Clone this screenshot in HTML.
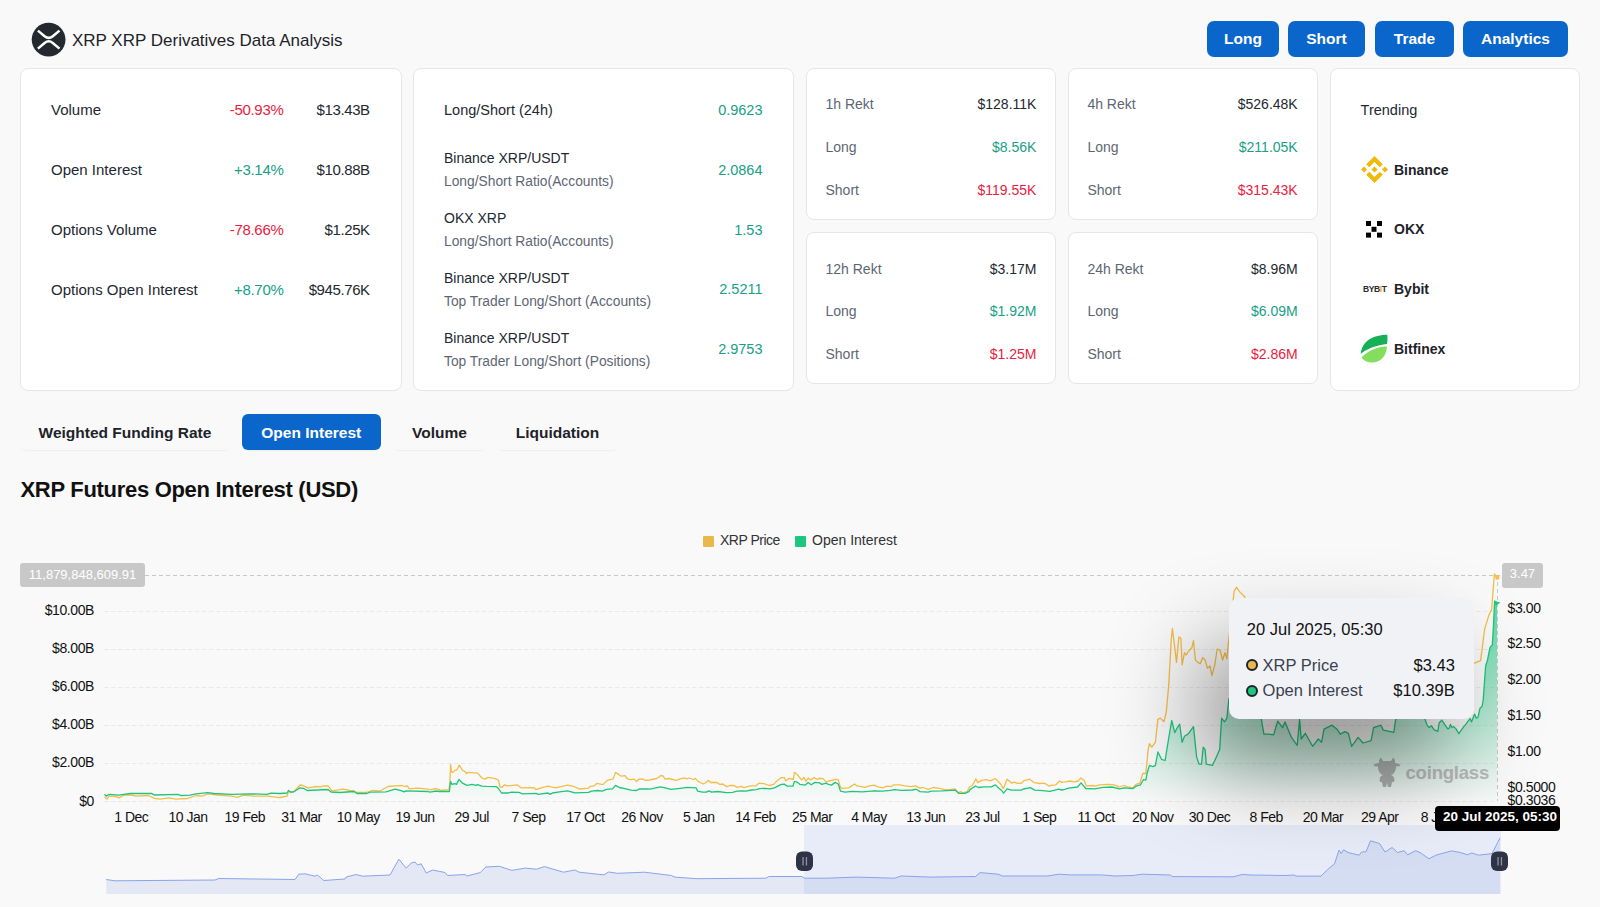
<!DOCTYPE html>
<html><head><meta charset="utf-8">
<style>
html,body{margin:0;padding:0}
body{width:1600px;height:907px;background:#f9f9fa;position:relative;overflow:hidden;font-family:"Liberation Sans",sans-serif;color:#1e2329}
.t{position:absolute;line-height:1;white-space:nowrap}
.card{position:absolute;background:#fff;border:1px solid #e6e6e6;border-radius:8px;box-sizing:border-box}
.btn{position:absolute;top:21px;height:36px;background:#0b66cc;border-radius:7px;color:#fff;font-weight:bold;font-size:15.5px;line-height:36px;text-align:center}
.tab{position:absolute;top:414px;height:36px;border-radius:6px;font-weight:bold;font-size:15.5px;line-height:38px;text-align:center;color:#1e2329;box-shadow:0 2px 2px -1px rgba(0,0,0,0.05)}
.red{color:#e9213e}.grn{color:#17a086}
.lbl{color:#222831}
.sub{color:#5e6673}
.ya{position:absolute;line-height:1;white-space:nowrap;font-size:14px;letter-spacing:-0.4px;color:#111}
.xa{position:absolute;line-height:1;white-space:nowrap;font-size:14px;letter-spacing:-0.5px;color:#111;width:80px;text-align:center}
</style></head><body>

<!-- header -->
<svg style="position:absolute;left:31px;top:21.5px" width="35" height="35" viewBox="0 0 35 35">
<circle cx="17.6" cy="17.6" r="16.9" fill="#23292f"/>
<path d="M6.9,8.6 L13.6,14.2 Q17.7,17.6 21.8,14.2 L28.5,8.6" fill="none" stroke="#fff" stroke-width="2.5"/>
<path d="M6.9,26.6 L13.6,21 Q17.7,17.6 21.8,21 L28.5,26.6" fill="none" stroke="#fff" stroke-width="2.5"/>
</svg>
<div class="t" style="left:72px;top:31.8px;font-size:17px;color:#1e2329">XRP XRP Derivatives Data Analysis</div>

<div class="btn" style="left:1207px;width:72px">Long</div>
<div class="btn" style="left:1288px;width:77px">Short</div>
<div class="btn" style="left:1375px;width:79px">Trade</div>
<div class="btn" style="left:1463px;width:105px">Analytics</div>

<!-- cards -->
<div class="card" style="left:20px;top:68px;width:382px;height:323px"></div>
<div class="card" style="left:413px;top:68px;width:381px;height:323px"></div>
<div class="card" style="left:806px;top:68px;width:250px;height:152px"></div>
<div class="card" style="left:1068px;top:68px;width:250px;height:152px"></div>
<div class="card" style="left:806px;top:232px;width:250px;height:152px"></div>
<div class="card" style="left:1068px;top:232px;width:250px;height:152px"></div>
<div class="card" style="left:1330px;top:68px;width:250px;height:323px"></div>

<!-- card 1 -->
<div class="t lbl" style="left:51px;top:102.3px;font-size:15px">Volume</div>
<div class="t red" style="right:1316.5px;top:102.3px;font-size:15px;letter-spacing:-0.3px">-50.93%</div>
<div class="t lbl" style="right:1230.3px;top:102.3px;font-size:15px;letter-spacing:-0.4px">$13.43B</div>
<div class="t lbl" style="left:51px;top:162px;font-size:15px">Open Interest</div>
<div class="t grn" style="right:1316.5px;top:162px;font-size:15px;letter-spacing:-0.3px">+3.14%</div>
<div class="t lbl" style="right:1230.3px;top:162px;font-size:15px;letter-spacing:-0.4px">$10.88B</div>
<div class="t lbl" style="left:51px;top:221.8px;font-size:15px">Options Volume</div>
<div class="t red" style="right:1316.5px;top:221.8px;font-size:15px;letter-spacing:-0.3px">-78.66%</div>
<div class="t lbl" style="right:1230.3px;top:221.8px;font-size:15px;letter-spacing:-0.4px">$1.25K</div>
<div class="t lbl" style="left:51px;top:281.6px;font-size:15px">Options Open Interest</div>
<div class="t grn" style="right:1316.5px;top:281.6px;font-size:15px;letter-spacing:-0.3px">+8.70%</div>
<div class="t lbl" style="right:1230.3px;top:281.6px;font-size:15px;letter-spacing:-0.4px">$945.76K</div>

<!-- card 2 -->
<div class="t lbl" style="left:444px;top:103.2px;font-size:14.5px">Long/Short (24h)</div>
<div class="t grn" style="right:837.5px;top:103.2px;font-size:14.5px">0.9623</div>
<div class="t lbl" style="left:444px;top:151.2px;font-size:14px">Binance XRP/USDT</div>
<div class="t sub" style="left:444px;top:175.4px;font-size:13.8px">Long/Short Ratio(Accounts)</div>
<div class="t grn" style="right:837.5px;top:163.2px;font-size:14.5px">2.0864</div>
<div class="t lbl" style="left:444px;top:211.2px;font-size:14px">OKX XRP</div>
<div class="t sub" style="left:444px;top:235.4px;font-size:13.8px">Long/Short Ratio(Accounts)</div>
<div class="t grn" style="right:837.5px;top:222.7px;font-size:14.5px">1.53</div>
<div class="t lbl" style="left:444px;top:271.2px;font-size:14px">Binance XRP/USDT</div>
<div class="t sub" style="left:444px;top:295.4px;font-size:13.8px">Top Trader Long/Short (Accounts)</div>
<div class="t grn" style="right:837.5px;top:282.2px;font-size:14.5px">2.5211</div>
<div class="t lbl" style="left:444px;top:330.7px;font-size:14px">Binance XRP/USDT</div>
<div class="t sub" style="left:444px;top:354.7px;font-size:13.8px">Top Trader Long/Short (Positions)</div>
<div class="t grn" style="right:837.5px;top:342.2px;font-size:14.5px">2.9753</div>

<!-- rekt cards -->
<div class="t sub" style="left:825.5px;top:97.4px;font-size:14px">1h Rekt</div>
<div class="t lbl" style="right:563.6px;top:97.4px;font-size:14px">$128.11K</div>
<div class="t sub" style="left:825.5px;top:139.9px;font-size:14px">Long</div>
<div class="t grn" style="right:563.6px;top:139.9px;font-size:14px">$8.56K</div>
<div class="t sub" style="left:825.5px;top:182.7px;font-size:14px">Short</div>
<div class="t red" style="right:563.6px;top:182.7px;font-size:14px">$119.55K</div>

<div class="t sub" style="left:1087.4px;top:97.4px;font-size:14px">4h Rekt</div>
<div class="t lbl" style="right:302.3px;top:97.4px;font-size:14px">$526.48K</div>
<div class="t sub" style="left:1087.4px;top:139.9px;font-size:14px">Long</div>
<div class="t grn" style="right:302.3px;top:139.9px;font-size:14px">$211.05K</div>
<div class="t sub" style="left:1087.4px;top:182.7px;font-size:14px">Short</div>
<div class="t red" style="right:302.3px;top:182.7px;font-size:14px">$315.43K</div>

<div class="t sub" style="left:825.5px;top:261.8px;font-size:14px">12h Rekt</div>
<div class="t lbl" style="right:563.6px;top:261.8px;font-size:14px">$3.17M</div>
<div class="t sub" style="left:825.5px;top:304.4px;font-size:14px">Long</div>
<div class="t grn" style="right:563.6px;top:304.4px;font-size:14px">$1.92M</div>
<div class="t sub" style="left:825.5px;top:346.7px;font-size:14px">Short</div>
<div class="t red" style="right:563.6px;top:346.7px;font-size:14px">$1.25M</div>

<div class="t sub" style="left:1087.4px;top:261.8px;font-size:14px">24h Rekt</div>
<div class="t lbl" style="right:302.3px;top:261.8px;font-size:14px">$8.96M</div>
<div class="t sub" style="left:1087.4px;top:304.4px;font-size:14px">Long</div>
<div class="t grn" style="right:302.3px;top:304.4px;font-size:14px">$6.09M</div>
<div class="t sub" style="left:1087.4px;top:346.7px;font-size:14px">Short</div>
<div class="t red" style="right:302.3px;top:346.7px;font-size:14px">$2.86M</div>

<!-- trending -->
<div class="t lbl" style="left:1360.6px;top:103.2px;font-size:14.5px">Trending</div>
<svg style="position:absolute;left:1360.5px;top:156.2px" width="27" height="27" viewBox="0 0 126.61 126.61">
<g fill="#f0b90b"><path d="M38.73,53.2 L63.3,28.64 L87.89,53.22 L102.19,38.92 L63.3,0 L24.42,38.88 Z"/>
<path d="M0,63.31 L14.3,49 L28.61,63.31 L14.3,77.61 Z"/>
<path d="M38.73,73.41 L63.3,98 L87.89,73.4 L102.2,87.69 L63.3,126.61 L24.42,87.73 Z"/>
<path d="M98,63.31 L112.3,49 L126.61,63.3 L112.3,77.61 Z"/>
<path d="M77.83,63.3 L63.3,48.76 L48.79,63.27 L63.3,77.79 Z"/></g>
</svg>
<div class="t" style="left:1394px;top:163.4px;font-size:14px;font-weight:bold;color:#1e2329">Binance</div>
<svg style="position:absolute;left:1366px;top:221px" width="16" height="17" viewBox="0 0 16 17">
<g fill="#000"><rect x="0" y="0" width="5" height="5"/><rect x="11" y="0" width="5" height="5"/><rect x="5.5" y="5.8" width="5" height="5"/><rect x="0" y="11.6" width="5" height="5"/><rect x="11" y="11.6" width="5" height="5"/></g>
</svg>
<div class="t" style="left:1394px;top:222.1px;font-size:14px;font-weight:bold;color:#1e2329">OKX</div>
<div class="t" style="left:1363px;top:285px;font-size:8.5px;font-weight:bold;color:#2b2b2b;letter-spacing:-0.4px">BYB<span style="color:#f7a600">I</span>T</div>
<div class="t" style="left:1394px;top:282.3px;font-size:14px;font-weight:bold;color:#1e2329">Bybit</div>
<svg style="position:absolute;left:1360px;top:334px" width="28" height="29" viewBox="0 0 28 29">
<path d="M27.3,0.8 C14,1 2,6.5 0.7,20 C7,14.5 17,11 27,10 C27.6,7 27.6,3.5 27.3,0.8 Z" fill="#16b157"/>
<path d="M1.5,23.5 C8,16.5 17,13 26.8,12.2 C27,21 21,28.5 12,28.5 C7,28.5 3.5,26.5 1.5,23.5 Z" fill="#85dd5d"/>
</svg>
<div class="t" style="left:1394px;top:342.1px;font-size:14px;font-weight:bold;color:#1e2329">Bitfinex</div>

<!-- tabs -->
<div class="tab" style="left:20px;width:210px">Weighted Funding Rate</div>
<div class="tab" style="left:241.5px;width:139.5px;background:#0b66cc;color:#fff">Open Interest</div>
<div class="tab" style="left:393px;width:93px">Volume</div>
<div class="tab" style="left:497px;width:121px">Liquidation</div>

<div class="t" style="left:20.5px;top:479.4px;font-size:22px;font-weight:bold;letter-spacing:-0.3px;color:#111">XRP Futures Open Interest (USD)</div>

<!-- legend -->
<div style="position:absolute;left:702.5px;top:536px;width:11.5px;height:11px;background:#e8b84c;border-radius:1px"></div>
<div class="t" style="left:720px;top:533.2px;font-size:14px;color:#333;letter-spacing:-0.5px">XRP Price</div>
<div style="position:absolute;left:794.5px;top:536px;width:11.5px;height:11px;background:#1ec77f;border-radius:1px"></div>
<div class="t" style="left:812px;top:533.2px;font-size:14px;color:#333">Open Interest</div>

<!-- chart svg -->
<svg style="position:absolute;left:0;top:0" width="1600" height="907" viewBox="0 0 1600 907">
<defs>
<linearGradient id="ga" gradientUnits="userSpaceOnUse" x1="0" y1="600" x2="0" y2="801">
<stop offset="0" stop-color="#1ec77f" stop-opacity="0.72"/>
<stop offset="1" stop-color="#1ec77f" stop-opacity="0.0"/>
</linearGradient>
</defs>
<g stroke="#e9e9e9" stroke-width="1" stroke-dasharray="4.5,2.5">
<line x1="104" y1="611.5" x2="1497" y2="611.5"/>
<line x1="104" y1="649.5" x2="1497" y2="649.5"/>
<line x1="104" y1="687.5" x2="1497" y2="687.5"/>
<line x1="104" y1="725.5" x2="1497" y2="725.5"/>
<line x1="104" y1="763.5" x2="1497" y2="763.5"/>
<line x1="104" y1="801.5" x2="1497" y2="801.5"/>
</g>
<line x1="145" y1="575.5" x2="1500" y2="575.5" stroke="#c8c8c8" stroke-width="1" stroke-dasharray="4,3"/>
<path d="M104.5,794.3 L106.3,796.1 L109.2,794.3 L118.8,795.2 L130.6,793.5 L152.0,793.5 L154.4,795.0 L178.0,794.3 L180.5,795.5 L190.0,795.2 L196.0,793.8 L207.8,792.6 L213.8,793.5 L231.6,794.3 L249.4,793.8 L267.2,794.3 L270.8,793.2 L280.0,793.5 L287.0,793.0 L288.5,790.5 L290.5,792.0 L294.0,791.8 L300.0,787.8 L304.0,788.5 L307.0,790.5 L328.0,789.5 L331.0,792.0 L340.0,792.5 L354.0,791.5 L357.0,793.5 L367.0,793.5 L370.0,792.2 L386.0,791.8 L395.0,789.2 L402.0,790.8 L404.0,791.8 L406.0,790.8 L428.0,791.5 L430.0,792.2 L436.0,791.0 L439.5,791.5 L440.0,791.5 L449.4,791.5 L450.5,781.4 L452.0,784.4 L455.0,783.6 L456.5,784.4 L459.1,779.4 L462.5,783.2 L467.0,785.4 L472.2,784.4 L476.0,785.4 L477.5,784.6 L482.0,786.2 L486.5,786.4 L496.2,786.6 L498.5,788.5 L501.5,793.0 L507.5,793.0 L512.0,792.2 L518.8,792.4 L522.5,793.8 L536.0,793.4 L538.2,794.4 L548.0,793.0 L550.2,794.4 L552.5,793.0 L559.5,791.9 L567.5,790.9 L575.0,792.8 L588.5,792.4 L591.5,791.2 L597.5,790.5 L602.0,791.1 L606.5,789.4 L612.5,788.9 L615.5,785.4 L619.2,787.5 L626.0,788.9 L631.2,790.1 L636.5,790.5 L639.5,788.9 L646.2,789.0 L650.0,789.1 L660.5,786.8 L665.0,787.9 L671.0,789.4 L680.0,788.4 L687.5,787.4 L696.1,787.8 L697.6,791.1 L702.5,792.2 L706.2,792.1 L708.9,790.8 L711.5,792.1 L717.5,791.5 L726.5,792.6 L732.5,792.4 L737.0,791.1 L743.0,790.9 L746.0,791.1 L751.3,790.0 L756.5,789.6 L759.5,788.6 L765.5,788.4 L770.0,788.9 L774.5,787.8 L776.8,786.6 L781.3,784.4 L784.3,784.1 L787.3,786.2 L792.9,786.2 L794.4,781.4 L797.0,782.1 L800.0,784.4 L805.2,785.1 L808.2,782.5 L811.2,784.8 L815.0,782.4 L819.5,782.9 L821.8,784.4 L826.2,783.2 L827.8,784.1 L831.5,785.1 L835.2,782.4 L838.2,784.0 L840.5,791.1 L845.0,792.1 L852.5,791.4 L862.2,791.9 L874.2,790.8 L882.5,791.1 L890.0,790.4 L894.5,789.6 L901.2,790.4 L912.5,790.0 L916.2,789.2 L920.0,791.6 L928.2,792.1 L931.2,791.2 L942.5,790.9 L955.2,790.1 L959.0,793.4 L965.0,793.4 L968.8,791.6 L970.2,789.4 L975.5,786.0 L978.5,787.5 L983.8,786.8 L991.2,786.8 L995.4,784.9 L998.8,788.2 L1001.8,790.5 L1003.6,793.1 L1007.0,788.9 L1011.5,790.1 L1021.2,790.1 L1023.5,789.0 L1030.2,787.6 L1034.8,790.1 L1040.0,790.3 L1049.8,791.4 L1058.8,789.2 L1061.8,790.0 L1064.8,789.4 L1068.5,788.1 L1077.5,787.0 L1081.1,782.9 L1085.8,788.5 L1094.8,788.9 L1103.0,787.4 L1112.0,787.0 L1119.5,788.9 L1124.0,787.8 L1133.0,788.6 L1136.0,786.2 L1140.5,784.8 L1143.5,779.5 L1145.8,780.2 L1147.0,773.8 L1149.4,765.4 L1153.0,766.6 L1155.4,765.4 L1157.9,752.0 L1161.5,759.3 L1165.1,760.5 L1168.8,737.5 L1171.7,720.5 L1174.8,732.6 L1177.2,727.8 L1179.7,724.2 L1182.1,742.3 L1184.5,736.3 L1188.2,733.9 L1193.5,726.6 L1196.6,756.9 L1199.1,764.2 L1201.5,764.2 L1203.2,747.2 L1205.1,749.6 L1206.3,764.2 L1212.4,765.4 L1214.8,760.5 L1219.7,749.6 L1221.6,718.1 L1224.5,721.8 L1226.9,718.1 L1228.9,698.7 L1240.0,690.0 L1255.0,700.0 L1261.4,719.5 L1263.9,734.1 L1268.8,734.1 L1273.6,734.9 L1277.7,721.1 L1282.6,727.6 L1285.0,721.9 L1291.5,737.4 L1297.2,745.5 L1299.6,719.5 L1301.2,739.0 L1305.3,733.3 L1312.6,746.3 L1318.3,739.0 L1321.6,742.2 L1324.0,729.2 L1332.1,725.2 L1337.0,729.2 L1340.2,734.1 L1345.1,731.7 L1348.4,733.3 L1351.6,746.3 L1358.1,737.4 L1363.0,743.0 L1371.1,740.6 L1373.6,727.6 L1380.9,725.2 L1383.3,730.1 L1393.8,732.3 L1395.5,720.3 L1399.0,703.0 L1421.0,703.0 L1425.4,720.3 L1427.1,725.4 L1429.2,727.5 L1431.6,725.8 L1434.0,729.6 L1437.8,731.3 L1439.2,722.7 L1441.9,720.3 L1445.0,724.8 L1447.8,728.9 L1449.1,728.2 L1450.5,724.4 L1451.9,727.5 L1453.6,726.5 L1456.0,728.9 L1458.8,733.7 L1463.6,726.8 L1464.9,725.4 L1467.0,722.7 L1470.1,718.6 L1471.5,722.0 L1474.6,714.1 L1476.3,718.2 L1478.0,717.2 L1480.0,708.2 L1482.1,706.2 L1483.2,700.0 L1485.6,666.0 L1487.5,660.0 L1490.0,647.5 L1492.3,645.0 L1493.5,625.0 L1494.6,601.0 L1497.1,602.7 L1497.1,801 L104.5,801 Z" fill="url(#ga)"/>
<path d="M104.5,796.7 L106.9,799.1 L109.2,796.1 L116.4,796.7 L118.8,797.9 L124.7,795.0 L130.6,795.0 L136.6,796.1 L148.4,795.5 L154.4,798.3 L160.3,799.1 L168.6,797.9 L175.8,799.1 L187.6,798.5 L196.0,795.5 L201.9,796.1 L207.8,793.8 L217.3,795.0 L231.6,796.1 L237.5,797.3 L243.5,795.2 L253.0,796.1 L268.4,796.1 L279.4,797.7 L280.0,797.5 L287.0,796.2 L288.5,791.5 L291.0,792.5 L294.0,791.5 L300.0,785.0 L303.0,785.5 L308.0,787.8 L317.0,786.5 L320.0,787.2 L323.0,786.0 L328.0,785.8 L332.0,791.0 L337.0,790.2 L343.0,789.2 L350.0,790.5 L354.0,791.0 L357.0,792.5 L366.0,792.5 L372.0,790.5 L380.0,791.0 L388.0,786.5 L395.0,785.8 L402.0,785.5 L405.0,786.5 L407.5,785.8 L409.0,788.8 L418.0,788.2 L428.0,789.2 L430.0,789.8 L436.0,788.5 L439.5,789.5 L440.0,790.4 L444.5,790.0 L449.0,789.6 L449.9,782.5 L450.6,764.5 L451.6,772.0 L453.1,772.4 L455.0,770.1 L456.9,770.1 L459.1,765.2 L462.5,770.1 L465.5,772.0 L466.6,773.5 L468.5,772.4 L477.5,773.1 L482.0,778.0 L485.0,779.1 L488.0,777.4 L495.5,778.6 L498.5,780.2 L500.0,787.0 L502.2,787.4 L504.5,784.8 L507.5,785.9 L517.2,784.8 L521.0,787.8 L533.8,787.6 L536.0,789.6 L541.2,787.8 L548.0,786.2 L555.5,787.8 L559.5,787.0 L560.0,786.8 L567.5,785.1 L573.5,786.4 L579.5,789.0 L588.5,788.2 L590.0,786.4 L593.8,785.9 L596.8,783.4 L602.8,784.6 L607.2,780.4 L613.2,778.9 L615.5,772.5 L618.5,774.4 L620.8,776.1 L625.2,775.6 L626.8,778.4 L629.8,779.6 L634.2,779.1 L636.5,781.5 L638.8,779.2 L642.5,778.9 L645.5,780.4 L649.2,780.0 L656.8,778.5 L660.9,775.5 L663.5,776.2 L665.0,779.2 L668.8,778.5 L676.2,780.4 L680.0,778.8 L684.9,778.0 L686.8,778.8 L689.0,778.0 L693.5,779.5 L695.4,778.4 L698.0,781.4 L703.2,784.0 L706.2,782.5 L708.5,780.2 L710.8,782.5 L716.8,782.5 L719.8,784.4 L722.8,784.0 L726.5,786.6 L730.2,785.5 L734.0,785.5 L737.0,787.4 L741.5,786.4 L743.8,787.6 L750.5,785.9 L755.8,785.9 L758.8,783.2 L764.0,783.6 L769.2,785.5 L773.8,784.4 L776.0,781.8 L781.3,777.6 L784.3,777.6 L785.8,781.0 L788.8,778.4 L793.3,779.5 L794.4,772.4 L797.0,774.2 L800.0,778.0 L801.5,779.9 L804.1,777.6 L806.0,781.4 L808.2,778.0 L810.5,779.9 L814.2,777.6 L817.2,779.5 L819.5,778.4 L823.2,778.6 L826.2,782.1 L828.5,781.0 L833.0,780.2 L834.5,779.4 L838.2,779.6 L840.5,787.4 L842.0,788.4 L848.8,787.8 L851.8,785.9 L854.4,783.9 L857.0,785.9 L865.2,787.4 L869.0,785.9 L874.3,785.1 L877.2,786.6 L882.5,787.8 L887.0,786.2 L891.5,786.6 L893.8,784.8 L899.8,784.8 L905.0,785.9 L911.0,786.6 L915.5,785.9 L920.0,788.2 L923.0,787.5 L928.2,789.4 L933.1,787.5 L939.5,788.4 L944.0,789.4 L948.5,789.8 L954.5,788.9 L956.0,789.8 L958.2,793.1 L960.5,791.6 L962.8,792.8 L967.2,791.6 L969.5,786.8 L972.5,785.2 L975.9,778.9 L977.8,782.6 L981.5,780.4 L986.0,779.6 L990.5,780.8 L995.0,778.5 L998.0,781.1 L1001.0,784.5 L1003.2,788.6 L1004.8,785.2 L1007.0,779.2 L1011.5,783.0 L1014.5,782.2 L1017.5,783.4 L1022.0,783.0 L1023.5,780.8 L1029.5,779.2 L1034.0,782.6 L1040.0,783.5 L1043.0,783.2 L1046.0,783.9 L1049.0,786.2 L1052.0,785.1 L1055.8,784.8 L1059.5,781.0 L1061.8,782.4 L1065.5,781.8 L1070.0,781.0 L1073.8,781.8 L1078.2,781.0 L1080.9,777.9 L1084.2,780.6 L1086.5,786.2 L1092.5,785.5 L1095.5,786.2 L1099.2,784.8 L1107.5,784.4 L1112.8,784.6 L1117.2,785.9 L1118.8,787.0 L1124.0,785.5 L1127.0,786.6 L1133.0,787.8 L1136.0,784.4 L1139.8,783.2 L1142.8,773.5 L1145.8,773.5 L1148.2,749.6 L1149.4,743.6 L1151.8,747.2 L1155.4,742.3 L1157.9,719.3 L1160.3,718.1 L1163.9,721.8 L1166.3,712.0 L1168.8,684.2 L1171.2,640.6 L1172.4,628.5 L1174.8,647.8 L1176.5,662.4 L1178.9,637.0 L1180.9,638.2 L1182.1,664.8 L1184.5,652.7 L1186.2,655.1 L1188.2,651.5 L1191.8,647.8 L1193.5,640.6 L1195.4,660.0 L1197.8,662.4 L1200.3,663.6 L1202.7,657.5 L1205.1,660.0 L1207.5,668.4 L1210.0,666.0 L1211.9,675.7 L1214.8,664.8 L1217.2,649.0 L1220.1,650.3 L1222.6,660.0 L1225.0,652.7 L1226.9,658.8 L1228.9,638.2 L1234.2,590.9 L1236.6,587.3 L1240.0,592.1 L1244.5,596.5 L1260.0,640.0 L1290.0,660.0 L1320.0,650.0 L1350.0,665.0 L1380.0,655.0 L1410.0,668.0 L1440.0,660.0 L1466.0,668.0 L1473.7,663.4 L1480.6,660.6 L1484.7,628.9 L1488.9,615.1 L1491.6,609.6 L1494.4,573.8 L1497.1,577.9" fill="none" stroke="#f5bd48" stroke-width="1.3" stroke-linejoin="round"/>
<path d="M104.5,794.3 L106.3,796.1 L109.2,794.3 L118.8,795.2 L130.6,793.5 L152.0,793.5 L154.4,795.0 L178.0,794.3 L180.5,795.5 L190.0,795.2 L196.0,793.8 L207.8,792.6 L213.8,793.5 L231.6,794.3 L249.4,793.8 L267.2,794.3 L270.8,793.2 L280.0,793.5 L287.0,793.0 L288.5,790.5 L290.5,792.0 L294.0,791.8 L300.0,787.8 L304.0,788.5 L307.0,790.5 L328.0,789.5 L331.0,792.0 L340.0,792.5 L354.0,791.5 L357.0,793.5 L367.0,793.5 L370.0,792.2 L386.0,791.8 L395.0,789.2 L402.0,790.8 L404.0,791.8 L406.0,790.8 L428.0,791.5 L430.0,792.2 L436.0,791.0 L439.5,791.5 L440.0,791.5 L449.4,791.5 L450.5,781.4 L452.0,784.4 L455.0,783.6 L456.5,784.4 L459.1,779.4 L462.5,783.2 L467.0,785.4 L472.2,784.4 L476.0,785.4 L477.5,784.6 L482.0,786.2 L486.5,786.4 L496.2,786.6 L498.5,788.5 L501.5,793.0 L507.5,793.0 L512.0,792.2 L518.8,792.4 L522.5,793.8 L536.0,793.4 L538.2,794.4 L548.0,793.0 L550.2,794.4 L552.5,793.0 L559.5,791.9 L567.5,790.9 L575.0,792.8 L588.5,792.4 L591.5,791.2 L597.5,790.5 L602.0,791.1 L606.5,789.4 L612.5,788.9 L615.5,785.4 L619.2,787.5 L626.0,788.9 L631.2,790.1 L636.5,790.5 L639.5,788.9 L646.2,789.0 L650.0,789.1 L660.5,786.8 L665.0,787.9 L671.0,789.4 L680.0,788.4 L687.5,787.4 L696.1,787.8 L697.6,791.1 L702.5,792.2 L706.2,792.1 L708.9,790.8 L711.5,792.1 L717.5,791.5 L726.5,792.6 L732.5,792.4 L737.0,791.1 L743.0,790.9 L746.0,791.1 L751.3,790.0 L756.5,789.6 L759.5,788.6 L765.5,788.4 L770.0,788.9 L774.5,787.8 L776.8,786.6 L781.3,784.4 L784.3,784.1 L787.3,786.2 L792.9,786.2 L794.4,781.4 L797.0,782.1 L800.0,784.4 L805.2,785.1 L808.2,782.5 L811.2,784.8 L815.0,782.4 L819.5,782.9 L821.8,784.4 L826.2,783.2 L827.8,784.1 L831.5,785.1 L835.2,782.4 L838.2,784.0 L840.5,791.1 L845.0,792.1 L852.5,791.4 L862.2,791.9 L874.2,790.8 L882.5,791.1 L890.0,790.4 L894.5,789.6 L901.2,790.4 L912.5,790.0 L916.2,789.2 L920.0,791.6 L928.2,792.1 L931.2,791.2 L942.5,790.9 L955.2,790.1 L959.0,793.4 L965.0,793.4 L968.8,791.6 L970.2,789.4 L975.5,786.0 L978.5,787.5 L983.8,786.8 L991.2,786.8 L995.4,784.9 L998.8,788.2 L1001.8,790.5 L1003.6,793.1 L1007.0,788.9 L1011.5,790.1 L1021.2,790.1 L1023.5,789.0 L1030.2,787.6 L1034.8,790.1 L1040.0,790.3 L1049.8,791.4 L1058.8,789.2 L1061.8,790.0 L1064.8,789.4 L1068.5,788.1 L1077.5,787.0 L1081.1,782.9 L1085.8,788.5 L1094.8,788.9 L1103.0,787.4 L1112.0,787.0 L1119.5,788.9 L1124.0,787.8 L1133.0,788.6 L1136.0,786.2 L1140.5,784.8 L1143.5,779.5 L1145.8,780.2 L1147.0,773.8 L1149.4,765.4 L1153.0,766.6 L1155.4,765.4 L1157.9,752.0 L1161.5,759.3 L1165.1,760.5 L1168.8,737.5 L1171.7,720.5 L1174.8,732.6 L1177.2,727.8 L1179.7,724.2 L1182.1,742.3 L1184.5,736.3 L1188.2,733.9 L1193.5,726.6 L1196.6,756.9 L1199.1,764.2 L1201.5,764.2 L1203.2,747.2 L1205.1,749.6 L1206.3,764.2 L1212.4,765.4 L1214.8,760.5 L1219.7,749.6 L1221.6,718.1 L1224.5,721.8 L1226.9,718.1 L1228.9,698.7 L1240.0,690.0 L1255.0,700.0 L1261.4,719.5 L1263.9,734.1 L1268.8,734.1 L1273.6,734.9 L1277.7,721.1 L1282.6,727.6 L1285.0,721.9 L1291.5,737.4 L1297.2,745.5 L1299.6,719.5 L1301.2,739.0 L1305.3,733.3 L1312.6,746.3 L1318.3,739.0 L1321.6,742.2 L1324.0,729.2 L1332.1,725.2 L1337.0,729.2 L1340.2,734.1 L1345.1,731.7 L1348.4,733.3 L1351.6,746.3 L1358.1,737.4 L1363.0,743.0 L1371.1,740.6 L1373.6,727.6 L1380.9,725.2 L1383.3,730.1 L1393.8,732.3 L1395.5,720.3 L1399.0,703.0 L1421.0,703.0 L1425.4,720.3 L1427.1,725.4 L1429.2,727.5 L1431.6,725.8 L1434.0,729.6 L1437.8,731.3 L1439.2,722.7 L1441.9,720.3 L1445.0,724.8 L1447.8,728.9 L1449.1,728.2 L1450.5,724.4 L1451.9,727.5 L1453.6,726.5 L1456.0,728.9 L1458.8,733.7 L1463.6,726.8 L1464.9,725.4 L1467.0,722.7 L1470.1,718.6 L1471.5,722.0 L1474.6,714.1 L1476.3,718.2 L1478.0,717.2 L1480.0,708.2 L1482.1,706.2 L1483.2,700.0 L1485.6,666.0 L1487.5,660.0 L1490.0,647.5 L1492.3,645.0 L1493.5,625.0 L1494.6,601.0 L1497.1,602.7" fill="none" stroke="#20c57c" stroke-width="1.3" stroke-linejoin="round"/>
<line x1="1497.5" y1="575" x2="1497.5" y2="801" stroke="#c8c8c8" stroke-width="1" stroke-dasharray="4,3"/>
<circle cx="1497.3" cy="577.5" r="2.2" fill="#f7bf4f"/>
<path d="M1494,601 L1500.5,602.5 L1496,605.5 Z" fill="#22c97f"/>
<!-- slider -->
<path d="M106.2,879.5 L115.0,880.8 L215.0,880.0 L218.8,878.5 L295.0,879.5 L298.8,874.2 L305.0,873.8 L315.0,876.2 L317.5,875.0 L323.8,880.5 L345.0,879.0 L346.2,877.0 L356.2,874.5 L362.5,876.2 L390.0,875.0 L398.8,859.2 L406.2,868.2 L411.2,863.0 L415.0,862.0 L417.5,865.0 L421.2,863.8 L426.2,873.0 L432.5,870.0 L445.0,872.5 L447.5,875.5 L465.0,874.5 L466.8,876.0 L480.2,872.6 L485.9,867.0 L499.4,866.3 L511.8,870.4 L525.2,868.1 L536.5,869.2 L544.4,866.6 L563.5,872.2 L574.8,870.0 L579.2,872.2 L604.0,874.9 L608.5,872.0 L617.5,873.3 L644.5,872.2 L671.5,875.5 L674.9,877.1 L696.3,878.7 L766.0,878.2 L768.8,876.5 L802.0,876.5 L804.5,878.2 L827.0,878.2 L856.2,877.1 L894.5,878.2 L901.2,876.0 L930.5,877.1 L975.5,876.5 L980.0,872.6 L998.0,874.2 L1002.5,876.0 L1047.5,876.0 L1058.8,874.2 L1070.0,874.9 L1101.5,874.9 L1115.0,876.0 L1133.0,875.5 L1142.0,874.2 L1170.2,875.0 L1172.5,876.6 L1233.2,876.8 L1242.2,874.5 L1251.2,875.0 L1285.0,875.5 L1294.0,875.0 L1296.2,876.1 L1321.0,876.1 L1327.8,869.4 L1334.5,863.8 L1339.0,850.2 L1341.2,853.6 L1343.5,849.8 L1348.0,852.5 L1352.5,853.6 L1359.2,855.2 L1361.5,852.0 L1366.0,851.8 L1370.5,840.8 L1379.5,843.5 L1385.0,852.0 L1392.0,847.5 L1397.5,852.5 L1404.2,850.7 L1407.6,854.8 L1415.5,850.7 L1420.0,852.5 L1429.0,858.8 L1435.8,855.2 L1451.5,850.9 L1460.5,852.5 L1467.3,854.8 L1471.8,853.0 L1478.5,855.2 L1492.0,853.6 L1497.7,842.4 L1500.0,837.9 L1500,894 L106.25,894 Z" fill="#e3e8f4"/>
<rect x="804" y="825" width="697" height="69" fill="#8fa8f0" fill-opacity="0.16"/>
<path d="M106.2,879.5 L115.0,880.8 L215.0,880.0 L218.8,878.5 L295.0,879.5 L298.8,874.2 L305.0,873.8 L315.0,876.2 L317.5,875.0 L323.8,880.5 L345.0,879.0 L346.2,877.0 L356.2,874.5 L362.5,876.2 L390.0,875.0 L398.8,859.2 L406.2,868.2 L411.2,863.0 L415.0,862.0 L417.5,865.0 L421.2,863.8 L426.2,873.0 L432.5,870.0 L445.0,872.5 L447.5,875.5 L465.0,874.5 L466.8,876.0 L480.2,872.6 L485.9,867.0 L499.4,866.3 L511.8,870.4 L525.2,868.1 L536.5,869.2 L544.4,866.6 L563.5,872.2 L574.8,870.0 L579.2,872.2 L604.0,874.9 L608.5,872.0 L617.5,873.3 L644.5,872.2 L671.5,875.5 L674.9,877.1 L696.3,878.7 L766.0,878.2 L768.8,876.5 L802.0,876.5 L804.5,878.2 L827.0,878.2 L856.2,877.1 L894.5,878.2 L901.2,876.0 L930.5,877.1 L975.5,876.5 L980.0,872.6 L998.0,874.2 L1002.5,876.0 L1047.5,876.0 L1058.8,874.2 L1070.0,874.9 L1101.5,874.9 L1115.0,876.0 L1133.0,875.5 L1142.0,874.2 L1170.2,875.0 L1172.5,876.6 L1233.2,876.8 L1242.2,874.5 L1251.2,875.0 L1285.0,875.5 L1294.0,875.0 L1296.2,876.1 L1321.0,876.1 L1327.8,869.4 L1334.5,863.8 L1339.0,850.2 L1341.2,853.6 L1343.5,849.8 L1348.0,852.5 L1352.5,853.6 L1359.2,855.2 L1361.5,852.0 L1366.0,851.8 L1370.5,840.8 L1379.5,843.5 L1385.0,852.0 L1392.0,847.5 L1397.5,852.5 L1404.2,850.7 L1407.6,854.8 L1415.5,850.7 L1420.0,852.5 L1429.0,858.8 L1435.8,855.2 L1451.5,850.9 L1460.5,852.5 L1467.3,854.8 L1471.8,853.0 L1478.5,855.2 L1492.0,853.6 L1497.7,842.4 L1500.0,837.9" fill="none" stroke="#8aa4ea" stroke-width="1"/>
<rect x="796" y="851.5" width="17" height="19.5" rx="6" fill="#2e3445"/>
<rect x="802.4" y="857" width="1.3" height="8.5" fill="#8d93a3"/><rect x="805.8" y="857" width="1.3" height="8.5" fill="#8d93a3"/>
<rect x="1491" y="851.5" width="17" height="19.5" rx="6" fill="#2e3445"/>
<rect x="1497.4" y="857" width="1.3" height="8.5" fill="#8d93a3"/><rect x="1500.8" y="857" width="1.3" height="8.5" fill="#8d93a3"/>
</svg>

<!-- y labels -->
<div style="position:absolute;left:20px;top:562.8px;width:125px;height:24.5px;background:#c8c8c8;border-radius:3px"></div>
<div class="t" style="left:28.8px;top:567.8px;font-size:13px;color:#fff">11,879,848,609.91</div>
<div style="position:absolute;left:1502px;top:562.5px;width:41px;height:25px;background:#c8c8c8;border-radius:3px"></div>
<div class="t" style="left:1509.8px;top:567.4px;font-size:13px;color:#fff">3.47</div>

<div class="ya" style="right:1506px;top:603px">$10.00B</div>
<div class="ya" style="right:1506px;top:641px">$8.00B</div>
<div class="ya" style="right:1506px;top:679px">$6.00B</div>
<div class="ya" style="right:1506px;top:717px">$4.00B</div>
<div class="ya" style="right:1506px;top:755px">$2.00B</div>
<div class="ya" style="right:1506px;top:793.5px">$0</div>

<div class="ya" style="left:1507.5px;top:600.5px">$3.00</div>
<div class="ya" style="left:1507.5px;top:636.4px">$2.50</div>
<div class="ya" style="left:1507.5px;top:672.3px">$2.00</div>
<div class="ya" style="left:1507.5px;top:708.2px">$1.50</div>
<div class="ya" style="left:1507.5px;top:744.2px">$1.00</div>
<div class="ya" style="left:1507.5px;top:780.2px">$0.5000</div>
<div class="ya" style="left:1507.5px;top:793.2px">$0.3036</div>

<!-- x labels -->
<div class="xa" style="left:91.25px;top:809.65px">1 Dec</div>
<div class="xa" style="left:148.00px;top:809.65px">10 Jan</div>
<div class="xa" style="left:204.75px;top:809.65px">19 Feb</div>
<div class="xa" style="left:261.50px;top:809.65px">31 Mar</div>
<div class="xa" style="left:318.25px;top:809.65px">10 May</div>
<div class="xa" style="left:375.00px;top:809.65px">19 Jun</div>
<div class="xa" style="left:431.75px;top:809.65px">29 Jul</div>
<div class="xa" style="left:488.50px;top:809.65px">7 Sep</div>
<div class="xa" style="left:545.25px;top:809.65px">17 Oct</div>
<div class="xa" style="left:602.00px;top:809.65px">26 Nov</div>
<div class="xa" style="left:658.75px;top:809.65px">5 Jan</div>
<div class="xa" style="left:715.50px;top:809.65px">14 Feb</div>
<div class="xa" style="left:772.25px;top:809.65px">25 Mar</div>
<div class="xa" style="left:829.00px;top:809.65px">4 May</div>
<div class="xa" style="left:885.75px;top:809.65px">13 Jun</div>
<div class="xa" style="left:942.50px;top:809.65px">23 Jul</div>
<div class="xa" style="left:999.25px;top:809.65px">1 Sep</div>
<div class="xa" style="left:1056.00px;top:809.65px">11 Oct</div>
<div class="xa" style="left:1112.75px;top:809.65px">20 Nov</div>
<div class="xa" style="left:1169.50px;top:809.65px">30 Dec</div>
<div class="xa" style="left:1226.25px;top:809.65px">8 Feb</div>
<div class="xa" style="left:1283.00px;top:809.65px">20 Mar</div>
<div class="xa" style="left:1339.75px;top:809.65px">29 Apr</div>
<div class="xa" style="left:1396.50px;top:809.65px">8 Jun</div>

<!-- watermark -->
<svg style="position:absolute;left:1373px;top:757px" width="28" height="32" viewBox="0 0 28 32">
<g fill="#9a9a9a" opacity="0.75">
<path d="M6,3 L8,0.5 L10,4 L18,4 L20,0.5 L22,3 L22,6 C25,6 27,7 27.5,9 L23,9.5 C23,14 21,17 18,18 C21,19 22,22 21,25 L19,25 L18,30 L15,30 L14,26 L13,30 L10,30 L9,25 L7,25 C6,22 7,19 10,18 C7,17 5,14 5,9.5 L0.5,9 C1,7 3,6 6,6 Z"/>
</g>
</svg>
<div class="t" style="left:1405.5px;top:763.6px;font-size:18.5px;font-weight:bold;color:#b4b4b4;opacity:0.9;letter-spacing:-0.2px">coinglass</div>

<!-- tooltip -->
<div style="position:absolute;left:1229px;top:598px;width:245px;height:121px;background:#f0f2f6;border-radius:10px;box-shadow:-28px 50px 90px 0px rgba(0,0,0,0.42)"></div>
<div class="t" style="left:1246.8px;top:620.7px;font-size:16.5px;color:#111">20 Jul 2025, 05:30</div>
<div style="position:absolute;left:1246px;top:659.2px;width:8px;height:8px;border:2px solid #1e2329;border-radius:50%;background:#e8b84c"></div>
<div class="t" style="left:1262.6px;top:657.3px;font-size:16.5px;color:#3a4150">XRP Price</div>
<div class="t" style="right:145.2px;top:657.3px;font-size:16.5px;color:#111">$3.43</div>
<div style="position:absolute;left:1246px;top:684.6px;width:8px;height:8px;border:2px solid #1e2329;border-radius:50%;background:#1ec77f"></div>
<div class="t" style="left:1262.6px;top:682.4px;font-size:16.5px;color:#3a4150">Open Interest</div>
<div class="t" style="right:145.2px;top:682.4px;font-size:16.5px;color:#111">$10.39B</div>

<div style="position:absolute;left:1434.5px;top:805.5px;width:125.5px;height:25.5px;background:#000;border-radius:4px"></div>
<div class="t" style="left:1442.9px;top:810.2px;font-size:13.5px;font-weight:bold;color:#fff">20 Jul 2025, 05:30</div>

</body></html>
